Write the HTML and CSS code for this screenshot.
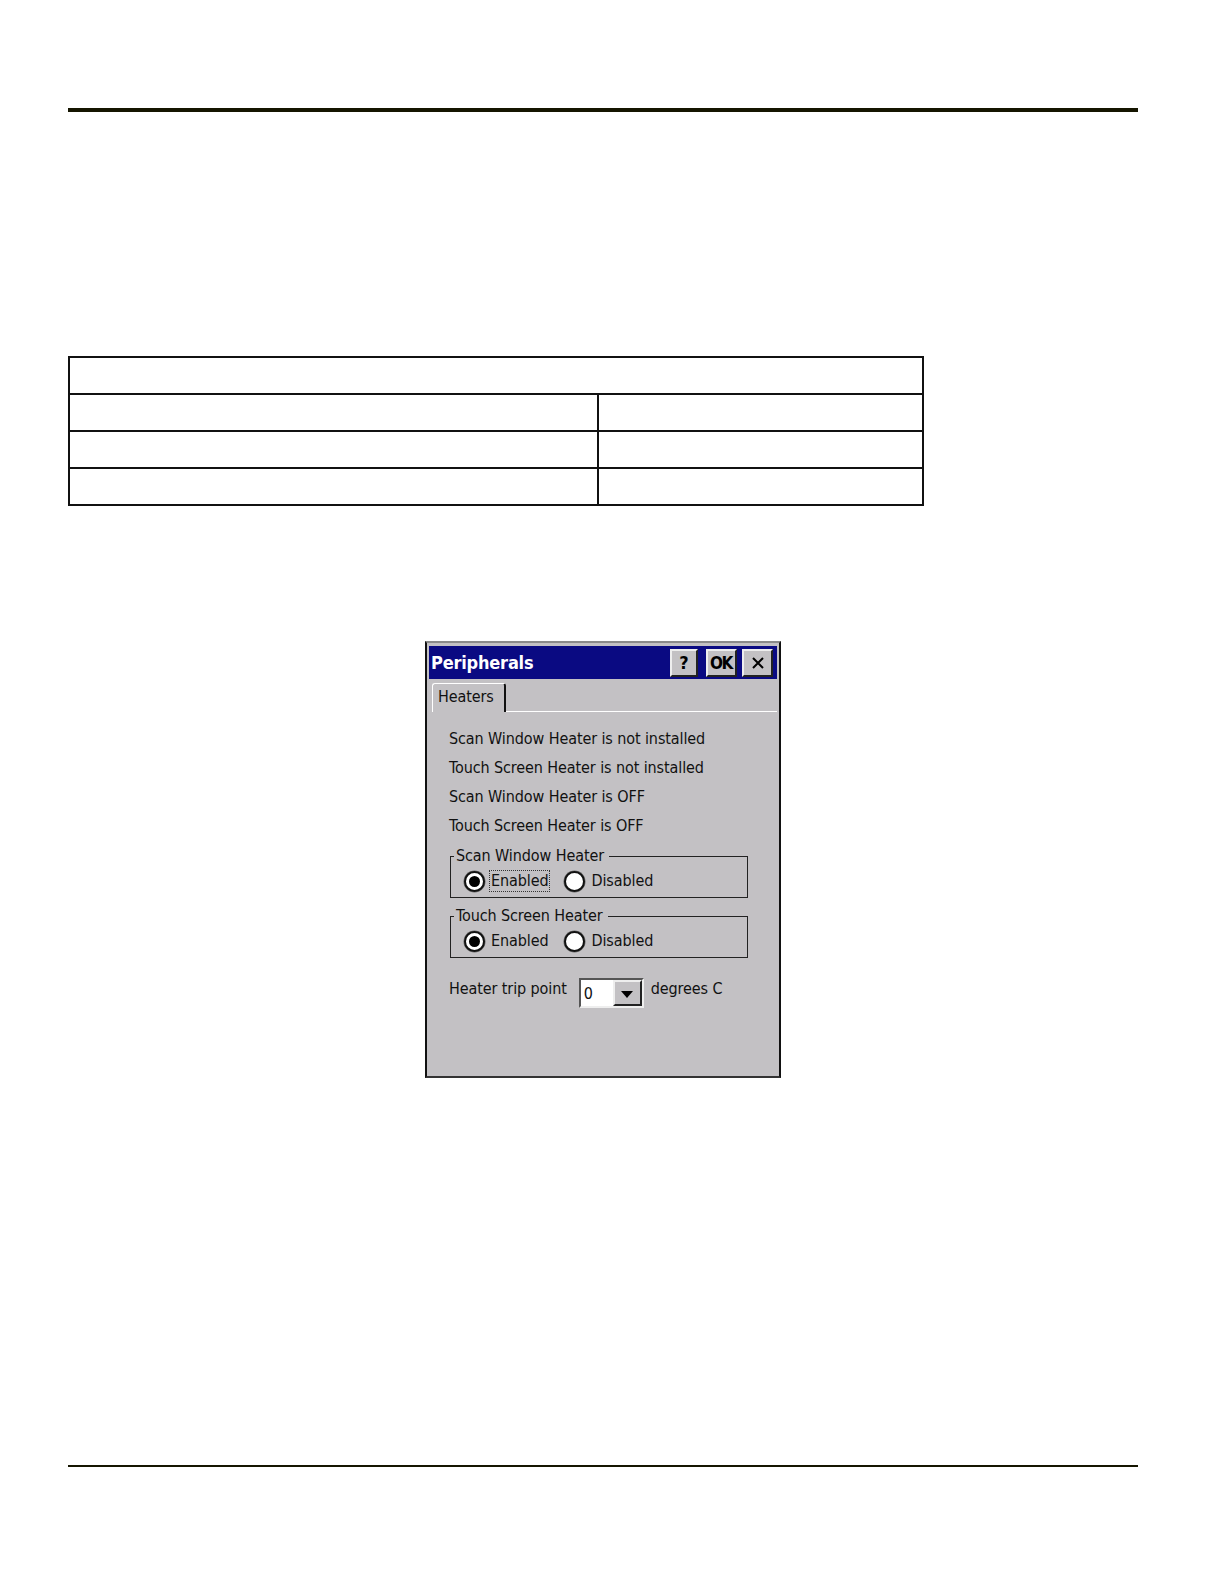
FILE: index.html
```html
<!DOCTYPE html>
<html>
<head>
<meta charset="utf-8">
<link rel="stylesheet" href="styles.css">
</head>
<body>
<div class="page">
  <div class="rule-top"></div>
  <table class="grid">
    <tr><td colspan="2"></td></tr>
    <tr><td class="c1"></td><td class="c2"></td></tr>
    <tr><td class="c1"></td><td class="c2"></td></tr>
    <tr><td class="c1"></td><td class="c2"></td></tr>
  </table>
  <div class="window">
    <div class="titlebar">
      <span class="title">Peripherals</span>
      <div class="tbtns">
        <span class="tbtn help">?</span>
        <span class="tbtn ok">OK</span>
        <span class="tbtn close">
          <svg width="14" height="14" viewBox="0 0 14 14"><path d="M2 2 L12 12 M12 2 L2 12" stroke="#000" stroke-width="2" fill="none"/></svg>
        </span>
      </div>
    </div>
    <div class="tabs">
      <span class="tab">Heaters</span>
      <span class="tabfill"></span>
    </div>
    <div class="panel">
      <div class="lines">
        <div>Scan Window Heater is not installed</div>
        <div>Touch Screen Heater is not installed</div>
        <div>Scan Window Heater is OFF</div>
        <div>Touch Screen Heater is OFF</div>
      </div>
      <fieldset class="group g1">
        <legend>Scan Window Heater</legend>
        <div class="radios">
          <span class="radio on"></span><span class="rlabel focus">Enabled</span>
          <span class="radio"></span><span class="rlabel">Disabled</span>
        </div>
      </fieldset>
      <fieldset class="group g2">
        <legend>Touch Screen Heater</legend>
        <div class="radios">
          <span class="radio on"></span><span class="rlabel">Enabled</span>
          <span class="radio"></span><span class="rlabel">Disabled</span>
        </div>
      </fieldset>
      <div class="trip">
        <span class="triplabel">Heater trip point</span>
        <span class="combo">
          <span class="cval">0</span>
          <span class="cbtn"><svg width="12" height="7" viewBox="0 0 12 7"><path d="M0 0 H12 L6 7 Z" fill="#000"/></svg></span>
        </span>
        <span class="unit">degrees C</span>
      </div>
    </div>
  </div>
  <div class="rule-bottom"></div>
</div>
</body>
</html>
```

FILE: styles.css
```css
html, body {
  margin: 0;
  padding: 0;
  background: #fff;
}
.page {
  width: 1224px;
  height: 1584px;
  position: relative;
  overflow: hidden;
}
.rule-top {
  margin: 108px 0 0 68px;
  width: 1070px;
  height: 4px;
  background: #151500;
}
.grid {
  margin: 244px 0 0 68px;
  width: 856px;
  border-collapse: collapse;
  border: 2px solid #222;
}
.grid td {
  height: 35px;
  border: 2px solid #111;
  padding: 0;
}
.grid .c1 { width: 527px; }
.window {
  margin: 135px 0 0 425px;
  width: 356px;
  height: 437px;
  box-sizing: border-box;
  background: #c3c1c4;
  border-top: 2px solid #8a8a8a;
  border-left: 2px solid #111;
  border-right: 2px solid #111;
  border-bottom: 2px solid #333;
  padding: 3px 2px 0 2px;
  font-family: "DejaVu Sans Condensed", "DejaVu Sans", sans-serif;
  color: #111;
  display: flex;
  flex-direction: column;
}
.titlebar {
  height: 33px;
  background: #0a0a82;
  display: flex;
  align-items: center;
  justify-content: space-between;
  padding: 0 4px 0 2px;
}
.title {
  color: #fff;
  font-weight: bold;
  font-size: 18px;
  letter-spacing: -0.2px;
}
.tbtns {
  display: flex;
  gap: 8px;
  align-items: center;
}
.tbtn {
  height: 28px;
  box-sizing: border-box;
  background: #c3c1c4;
  border-top: 2px solid #eee;
  border-left: 2px solid #eee;
  border-right: 2px solid #222;
  border-bottom: 2px solid #222;
  display: flex;
  align-items: center;
  justify-content: center;
  font-weight: bold;
  font-size: 18px;
  color: #000;
}
.help { width: 28px; }
.ok { width: 31px; font-size: 17px; letter-spacing: -1.5px; padding-right: 1px; }
.close { width: 31px; margin-left: -3px; }
.tabs {
  display: flex;
  height: 31px;
  margin-top: 2px;
  align-items: flex-end;
}
.tab {
  margin-left: 3px;
  width: 74px;
  height: 29px;
  box-sizing: border-box;
  border-top: 1px solid #fff;
  border-left: 1px solid #fff;
  border-right: 2px solid #111;
  border-radius: 3px 3px 0 0;
  padding-left: 5px;
  font-size: 16px;
  letter-spacing: -0.1px;
  line-height: 26px;
}
.tabfill {
  flex: 1;
  border-bottom: 1px solid #fff;
  height: 0;
}
.panel {
  flex: 1;
  padding: 12px 0 0 20px;
  font-size: 16px;
  letter-spacing: -0.1px;
}
.lines div {
  line-height: 29px;
  height: 29px;
}
.group {
  margin: 7px 0 0 1px;
  width: 298px;
  box-sizing: border-box;
  border: 1px solid #222;
  padding: 5px 0 5px 13px;
  min-width: 0;
}
.group legend {
  padding: 0 5px 0 2px;
  margin-left: -10px;
  line-height: 18px;
  font-size: 16px;
}
.g2 { margin-top: 9px; }
.radios {
  display: flex;
  align-items: center;
  height: 22px;
}
.radio {
  width: 21px;
  height: 21px;
  box-sizing: border-box;
  border-radius: 50%;
  background: #fff;
  border: 2px solid #111;
  box-shadow: 0 0 0 0.5px #666;
  position: relative;
  flex: none;
}
.radio.on::after {
  content: "";
  position: absolute;
  left: 3px;
  top: 3px;
  width: 11px;
  height: 11px;
  border-radius: 50%;
  background: #000;
}
.rlabel {
  margin-left: 4px;
  margin-right: 14px;
  padding: 0 1px;
  line-height: 20px;
  border: 1px dotted transparent;
}
.rlabel.focus {
  border-color: #333;
}
.trip {
  display: flex;
  align-items: flex-start;
  margin-top: 20px;
}
.triplabel {
  line-height: 20px;
  margin-top: 1px;
}
.combo {
  margin-left: 12px;
  width: 65px;
  height: 30px;
  box-sizing: border-box;
  background: #fff;
  border-top: 2px solid #555;
  border-left: 2px solid #555;
  border-right: 2px solid #eee;
  border-bottom: 2px solid #eee;
  display: flex;
  align-items: stretch;
}
.cval {
  flex: 1;
  padding: 4px 0 0 3px;
  line-height: 20px;
}
.cbtn {
  width: 29px;
  box-sizing: border-box;
  background: #c3c1c4;
  border: 2px solid #222;
  border-top-color: #eee;
  border-left-color: #eee;
  display: flex;
  align-items: center;
  justify-content: center;
  padding-top: 3px;
}
.unit {
  margin-left: 7px;
  line-height: 20px;
  margin-top: 1px;
}
.rule-bottom {
  margin: 387px 0 0 68px;
  width: 1070px;
  height: 2px;
  background: #151500;
}
```
